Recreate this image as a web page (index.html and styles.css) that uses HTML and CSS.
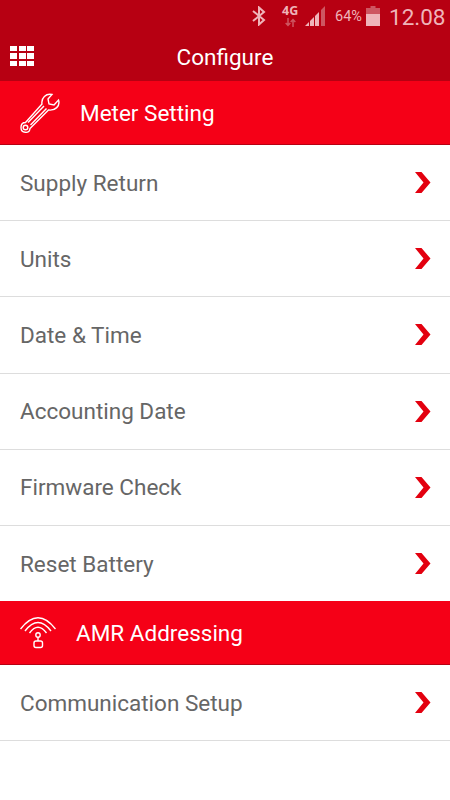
FILE: index.html
```html
<!DOCTYPE html>
<html lang="en">
<head>
  <meta charset="UTF-8">
  <meta name="viewport" content="width=device-width, initial-scale=1.0">
  <title>Configure</title>
  <link rel="stylesheet" href="styles.css">
</head>
<body>
  <header>
    <div class="status">
      <svg class="bluetooth" width="14" height="20" viewBox="0 0 14 20">
        <path d="M1 5L12 14L7 18.5V1.5L12 6L1 15"/>
      </svg>
      <div class="network">
        <span>4G</span>
        <svg width="11" height="9" viewBox="0 0 11 9">
          <path d="M3 0V7M.7 5L3 7.5L5.3 5M8 9V2M5.7 4L8 1.5L10.3 4"/>
        </svg>
      </div>
      <svg class="signal" width="20" height="20" viewBox="0 0 20 20">
        <path d="M0 20L4 16V20ZM5 15L9 11V20H5ZM10 10L14 6V20H10Z"/>
        <path class="dim" d="M16 4L20 0V20H16Z"/>
      </svg>
      <span class="percent">64%</span>
      <svg class="battery" width="14" height="20" viewBox="0 0 14 20">
        <path class="dim" d="M4.500 0H9.500V2H14V8H0V2H4.500Z"/>
        <path d="M0 8H14V20H0Z"/>
      </svg>
      <span class="clock">12.08</span>
    </div>
    <div class="titlebar">
      <div class="menu">
        <i></i><i></i><i></i>
        <i></i><i></i><i></i>
        <i></i><i></i><i></i>
      </div>
      <h1>Configure</h1>
    </div>
  </header>
  <main>
    <h2>
      <svg class="wrench" width="40" height="40" viewBox="0 0 40 40">
        <path d="M22 11C21 5 26 0 32 1.500L28 6L29 11L34 12L38.500 7C40.500 13 35 18 28.500 17L10 35.500C9.500 41 1 40.500 1 34.500C1 31 3 29.500 5.500 29.500ZM24 13L8 29.500M26.500 15.500L10.500 32"/>
        <circle cx="5.500" cy="34.500" r="2.300"/>
      </svg>
      <span>Meter Setting</span>
    </h2>
    <ul class="meter">
      <li>Supply Return <svg width="16" height="21" viewBox="0 0 16 21"><path d="M0 0H6.500L15.500 10.500L6.500 21H0L8.500 10.500Z"/></svg></li>
      <li>Units <svg width="16" height="21" viewBox="0 0 16 21"><path d="M0 0H6.500L15.500 10.500L6.500 21H0L8.500 10.500Z"/></svg></li>
      <li>Date &amp; Time <svg width="16" height="21" viewBox="0 0 16 21"><path d="M0 0H6.500L15.500 10.500L6.500 21H0L8.500 10.500Z"/></svg></li>
      <li>Accounting Date <svg width="16" height="21" viewBox="0 0 16 21"><path d="M0 0H6.500L15.500 10.500L6.500 21H0L8.500 10.500Z"/></svg></li>
      <li>Firmware Check <svg width="16" height="21" viewBox="0 0 16 21"><path d="M0 0H6.500L15.500 10.500L6.500 21H0L8.500 10.500Z"/></svg></li>
      <li>Reset Battery <svg width="16" height="21" viewBox="0 0 16 21"><path d="M0 0H6.500L15.500 10.500L6.500 21H0L8.500 10.500Z"/></svg></li>
    </ul>
    <h2>
      <svg class="antenna" width="36" height="32" viewBox="0 0 36 32">
        <path d="M.5 12Q18-10.500 35.500 12M5 14Q18-3 31 14M9.500 16Q18 4.500 26.500 16M18 20V24"/>
        <circle cx="18" cy="18" r="2.200"/>
        <rect x="14" y="24" width="8.500" height="6.500" rx="2"/>
      </svg>
      <span>AMR Addressing</span>
    </h2>
    <ul>
      <li>Communication Setup <svg width="16" height="21" viewBox="0 0 16 21"><path d="M0 0H6.500L15.500 10.500L6.500 21H0L8.500 10.500Z"/></svg></li>
    </ul>
  </main>
</body>
</html>
```
FILE: styles.css
```css
* {
  box-sizing: border-box;
}
body {
  margin: 0;
  background: #fff;
  font-family: Roboto, "Liberation Sans", sans-serif;
}
header {
  height: 81px;
  background: #b70012;
  color: #fff;
}
.status {
  display: flex;
  height: 34px;
  padding-left: 252px;
  color: #efb4b9;
}
.status > * {
  flex-shrink: 0;
}
.status svg {
  fill: #efb4b9;
}
.status .dim {
  fill: #ce5661;
}
.status .bluetooth {
  margin-top: 6px;
  fill: none;
  stroke: #efb4b9;
  stroke-width: 2;
}
.network {
  width: 18px;
  margin: 4px 0 0 16px;
  font-family: "Open Sans", sans-serif;
  font-size: 12.5px;
  font-weight: bold;
  line-height: 13px;
}
.status .network svg {
  display: block;
  margin: 1px 0 0 3px;
  fill: none;
  stroke: #ce5661;
  stroke-width: 1.5;
}
.signal {
  margin: 6px 0 0 5px;
}
.percent {
  width: 30px;
  margin-left: 10px;
  font-size: 14.5px;
  line-height: 34px;
}
.battery {
  margin: 6px 0 0 1px;
}
.clock {
  margin-left: 9px;
  font-size: 22.5px;
  line-height: 34px;
}
.titlebar {
  display: grid;
  grid-template-columns: 24px 1fr 24px;
  align-items: center;
  height: 46px;
  padding: 0 10px;
}
.menu {
  display: grid;
  grid-template-columns: repeat(3, 7px);
  gap: 2px 1.5px;
  margin-bottom: 2px;
}
.menu i {
  height: 5.5px;
  background: #fff;
}
h1 {
  margin: 0;
  font-size: 22.5px;
  font-weight: normal;
  text-align: center;
}
h2 {
  display: flex;
  align-items: center;
  height: 64px;
  margin: 0;
  padding-left: 20px;
  border-bottom: 1px solid #b70012;
  background: #f50017;
  color: #fff;
  font-size: 22.5px;
  font-weight: normal;
}
h2 svg {
  margin-right: 20px;
  fill: none;
  stroke: #fff;
  stroke-width: 1.4;
}
ul {
  margin: 0;
  padding: 0;
  list-style: none;
}
.meter {
  height: 456px;
  overflow: hidden;
}
li {
  display: flex;
  align-items: center;
  justify-content: space-between;
  height: 76.2px;
  padding: 0 19px 0 20px;
  border-bottom: 1px solid #ddd;
  color: #666;
  font-size: 22.5px;
}
li svg {
  fill: #e3000f;
}
```
